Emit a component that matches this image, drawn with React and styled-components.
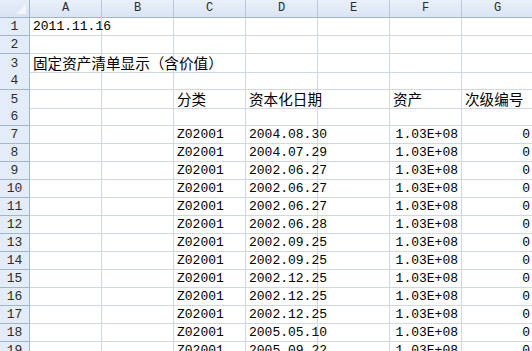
import React from "react";
import styled, { createGlobalStyle } from "styled-components";

const Global = createGlobalStyle`
  html, body { margin: 0; padding: 0; background: #fff; overflow: hidden; }
  body { font-family: "Liberation Mono", "Noto Sans CJK SC", monospace; }
`;

const COLS = "30px 72px 72px 72px 72px 72px 72px 72px";

const Sheet = styled.div`
  width: 532px;
  height: 351px;
  overflow: hidden;
  background: #fff;
`;

const HeaderRow = styled.div`
  display: grid;
  grid-template-columns: ${COLS};
  height: 18px;
`;

const Corner = styled.div`
  position: relative;
  box-sizing: border-box;
  background: linear-gradient(#e6eef9, #d8e3f3);
  border-right: 1px solid #9eb6ce;
  border-bottom: 1px solid #9eb6ce;
  &::after {
    content: "";
    position: absolute;
    right: 3px;
    bottom: 3px;
    width: 0;
    height: 0;
    border-left: 10px solid transparent;
    border-bottom: 10px solid #f2f5fa;
  }
`;

const ColHead = styled.div`
  box-sizing: border-box;
  background: linear-gradient(#e9f0fa, #dae4f3);
  border-right: 1px solid #b7c8dc;
  border-bottom: 1px solid #9eb6ce;
  display: flex;
  align-items: center;
  justify-content: center;
  font-family: "Liberation Mono", monospace;
  font-size: 12px;
  color: #2c2c2c;
  line-height: 17px;
`;

const Row = styled.div`
  display: grid;
  grid-template-columns: ${COLS};
  height: 18px;
`;

const RowHead = styled.div`
  box-sizing: border-box;
  background: #e4ecf7;
  border-right: 1px solid #9eb6ce;
  border-bottom: 1px solid #9eb6ce;
  display: flex;
  align-items: center;
  justify-content: center;
  font-family: "Liberation Mono", monospace;
  font-size: 13px;
  color: #2c2c2c;
  line-height: 17px;
`;

const Cell = styled.div`
  box-sizing: border-box;
  border-right: 1px solid #d0d7e5;
  border-bottom: 1px solid #d0d7e5;
  display: flex;
  align-items: flex-end;
  justify-content: ${(p) => (p.$right ? "flex-end" : "flex-start")};
  padding: 0 ${(p) => (p.$right ? "3px" : "0")} 0 ${(p) => (p.$right ? "0" : "3px")};
  white-space: nowrap;
  overflow: visible;
  color: #000;
  font-family: ${(p) =>
    p.$cjk ? `"Noto Sans CJK SC", sans-serif` : `"Liberation Mono", monospace`};
  font-size: ${(p) => (p.$cjk ? "14.6px" : "13px")};
  line-height: ${(p) => (p.$cjk ? "18px" : "16px")};
  position: relative;
  z-index: ${(p) => (p.$over ? 1 : 0)};
`;

const letters = ["A", "B", "C", "D", "E", "F", "G"];

const dates = [
  "2004.08.30",
  "2004.07.29",
  "2002.06.27",
  "2002.06.27",
  "2002.06.27",
  "2002.06.28",
  "2002.09.25",
  "2002.09.25",
  "2002.12.25",
  "2002.12.25",
  "2002.12.25",
  "2005.05.10",
  "2005.09.22",
];

function buildRows() {
  const rows = [];
  rows.push({ n: 1, cells: [{ c: 0, t: "2011.11.16" }] });
  rows.push({ n: 2, cells: [] });
  rows.push({ n: 3, cells: [{ c: 0, t: "固定资产清单显示（含价值）", cjk: true }] });
  rows.push({ n: 4, cells: [] });
  rows.push({
    n: 5,
    cells: [
      { c: 2, t: "分类", cjk: true },
      { c: 3, t: "资本化日期", cjk: true },
      { c: 5, t: "资产", cjk: true },
      { c: 6, t: "次级编号", cjk: true },
    ],
  });
  rows.push({ n: 6, cells: [] });
  dates.forEach((d, i) => {
    rows.push({
      n: 7 + i,
      cells: [
        { c: 2, t: "Z02001" },
        { c: 3, t: d },
        { c: 5, t: "1.03E+08", right: true },
        { c: 6, t: "0", right: true },
      ],
    });
  });
  return rows;
}

export default function App() {
  const rows = buildRows();
  return (
    <>
      <Global />
      <Sheet>
        <HeaderRow>
          <Corner />
          {letters.map((l) => (
            <ColHead key={l}>{l}</ColHead>
          ))}
        </HeaderRow>
        {rows.map((r) => (
          <Row key={r.n}>
            <RowHead>{r.n}</RowHead>
            {letters.map((l, ci) => {
              const cell = r.cells.find((x) => x.c === ci);
              return (
                <Cell
                  key={l}
                  $cjk={cell && cell.cjk}
                  $right={cell && cell.right}
                  $over={!!cell}
                >
                  {cell ? cell.t : null}
                </Cell>
              );
            })}
          </Row>
        ))}
      </Sheet>
    </>
  );
}
